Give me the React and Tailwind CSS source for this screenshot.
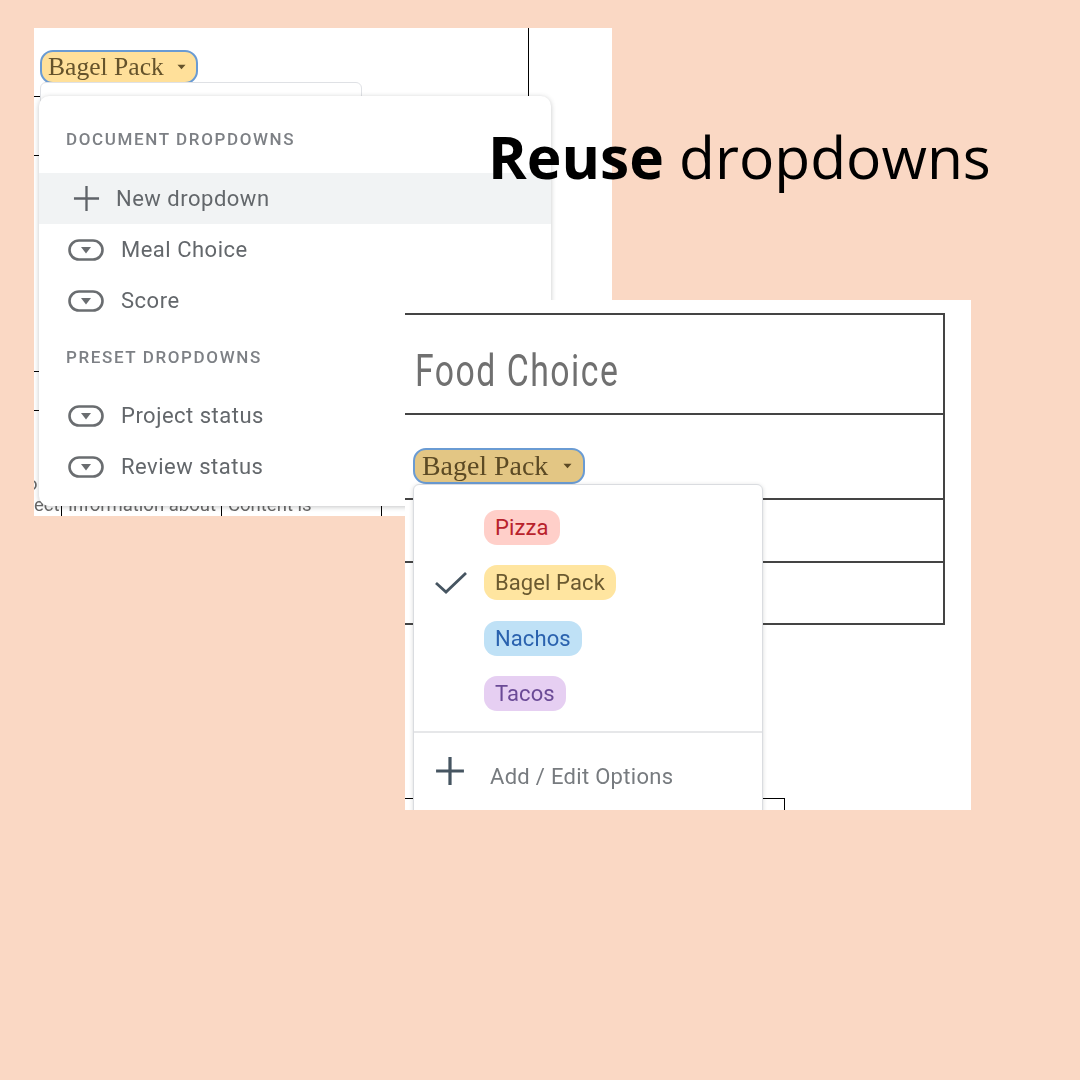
import React from "react";

const documentItems = ["Meal Choice", "Score"];
const presetItems = ["Project status", "Review status"];

const foodOptions = [
  { label: "Pizza", bg: "bg-[#ffcfc9]", text: "text-[#b8222c]" },
  { label: "Bagel Pack", bg: "bg-[#ffe5a0]", text: "text-[#6b5a30]", checked: true },
  { label: "Nachos", bg: "bg-[#bfe1f6]", text: "text-[#2a62ae]" },
  { label: "Tacos", bg: "bg-[#e6cff2]", text: "text-[#6a4a96]" },
];

function ChipIcon() {
  return (
    <svg width="36" height="22" viewBox="0 0 36 22" fill="none" className="shrink-0">
      <rect x="1.5" y="1.5" width="33" height="19" rx="9.5" stroke="#6a6d70" strokeWidth="2.6" />
      <path d="M13 8h10l-5 6.5z" fill="#6a6d70" />
    </svg>
  );
}

function PlusIcon({ size, color, weight }) {
  return (
    <svg width={size} height={size} viewBox="0 0 28 28" fill="none" className="shrink-0">
      <path d="M14 1v26M1 14h26" stroke={color} strokeWidth={weight} />
    </svg>
  );
}

function Stub({ className }) {
  return <div className={`absolute h-px bg-black ${className}`} />;
}

function SectionLabel({ children }) {
  return (
    <div className="font-['Roboto',sans-serif] text-[17px] leading-5 font-medium tracking-[1.62px] text-[#7d8085]">
      {children}
    </div>
  );
}

function DropdownRow({ label }) {
  return (
    <div className="flex h-[51px] items-center gap-[17px] pl-[29px]">
      <ChipIcon />
      <span className="text-[22px] tracking-[0.5px] text-[#63676b]">{label}</span>
    </div>
  );
}

function DocumentPanel() {
  return (
    <div className="absolute top-[28px] left-[34px] h-[488px] w-[578px] overflow-hidden bg-white">
      <div className="absolute inset-0 blur-[0.4px]">
        {/* table behind the menus */}
        <div className="absolute top-0 left-[494px] h-[70px] w-px bg-black" />
        <Stub className="top-[68px] left-0 w-[8px]" />
        <Stub className="top-[127px] left-0 w-[8px]" />
        <Stub className="top-[343px] left-0 w-[8px]" />
        <Stub className="top-[382px] left-0 w-[8px]" />
        <span className="absolute top-[444px] -left-[7px] font-['Roboto',sans-serif] text-[18.5px] leading-6 text-[#666]">o</span>
        <div className="absolute top-[470px] left-0 flex h-[18px] w-[350px] overflow-hidden font-['Roboto',sans-serif] text-[18.5px] leading-[14px] text-[#666]">
          <span className="w-[28px] shrink-0 border-r border-black pr-[6px] text-right">ect</span>
          <span className="w-[160px] shrink-0 border-r border-black pl-[6px] whitespace-nowrap">Information about</span>
          <span className="w-[160px] shrink-0 border-r border-black pl-[6px] whitespace-nowrap">Content is</span>
        </div>

        <div className="absolute top-[22px] left-[6px] flex h-[34px] items-center rounded-[13px] border-2 border-[#6a9bd3] bg-[#ffe09a] pr-[10px] pl-[6px] font-['Liberation_Serif',serif] text-[25.6px] text-[#65532b]">
          <span className="leading-none">Bagel Pack</span>
          <svg width="9" height="6" viewBox="0 0 10 6" className="ml-[13px]">
            <path d="M0.5 0.5h9L5 5.5z" fill="#65532b" />
          </svg>
        </div>
        <div className="absolute top-[54px] left-[6px] h-[60px] w-[322px] rounded-md border border-[#dfe1e5] bg-white" />

        <div className="absolute top-[68px] left-[5px] flex h-[410px] w-[512px] flex-col rounded-[10px] bg-white font-['Roboto',sans-serif] shadow-[0_1px_5px_rgba(60,64,67,0.3)]">
          <div className="px-[27px] pt-[33px] pb-[24px]">
            <SectionLabel>DOCUMENT DROPDOWNS</SectionLabel>
          </div>
          <div className="flex h-[51px] items-center gap-[16px] bg-[#f1f3f4] pl-[34px]">
            <PlusIcon size={27} color="#5f6368" weight={2.4} />
            <span className="text-[22px] tracking-[0.5px] text-[#63676b]">New dropdown</span>
          </div>
          {documentItems.map((item) => (
            <DropdownRow key={item} label={item} />
          ))}
          <div className="px-[27px] pt-[21px] pb-[23px]">
            <SectionLabel>PRESET DROPDOWNS</SectionLabel>
          </div>
          {presetItems.map((item) => (
            <DropdownRow key={item} label={item} />
          ))}
        </div>
      </div>
    </div>
  );
}

function FoodPanel() {
  return (
    <div className="absolute top-[300px] left-[405px] h-[510px] w-[566px] overflow-hidden bg-white">
      <div className="absolute inset-0 blur-[0.4px]">
        {/* table */}
        <div className="absolute top-[13px] left-0 flex h-[312px] w-[540px] flex-col border-t-2 border-r-2 border-b-2 border-[#444]">
          <div className="flex h-[100px] items-center border-b-2 border-[#444] pt-[12px] pl-[10px]">
            <span className="origin-left scale-x-[0.75] font-['Roboto',sans-serif] text-[45px] leading-none tracking-[2px] whitespace-nowrap text-[#707070]">
              Food Choice
            </span>
          </div>
          <div className="h-[85px] border-b-2 border-[#444]" />
          <div className="h-[63px] border-b-2 border-[#444]" />
        </div>
        <div className="absolute top-[498px] left-0 h-[12px] w-[380px] border-t border-r border-black" />

        <div className="absolute top-[148px] left-[8px] flex h-[36px] items-center rounded-[13px] border-2 border-[#6a9bd3] bg-[#e3c684] pr-[11px] pl-[7px] font-['Liberation_Serif',serif] text-[27.9px] text-[#5c4a24]">
          <span className="leading-none">Bagel Pack</span>
          <svg width="9" height="6" viewBox="0 0 10 6" className="ml-[15px]">
            <path d="M0.5 0.5h9L5 5.5z" fill="#5c4a24" />
          </svg>
        </div>

        <div className="absolute top-[184px] left-[8px] flex h-[340px] w-[350px] flex-col rounded-md border border-[#dadce0] bg-white font-['Roboto',sans-serif] shadow-[0_1px_4px_rgba(60,64,67,0.2)]">
          <div className="flex flex-col pt-[25px]">
            {foodOptions.map((option) => (
              <div key={option.label} className="flex h-[55.3px] items-start pl-[20px]">
                <div className="flex h-[35px] w-[50px] items-center">
                  {option.checked && (
                    <svg width="34" height="24" viewBox="0 0 34 24" fill="none" className="-mt-[2px]">
                      <path d="M2 13l10 9L32 3" stroke="#465561" strokeWidth="2.8" />
                    </svg>
                  )}
                </div>
                <span className={`flex h-[35px] items-center rounded-[13px] px-[11px] text-[22px] tracking-[0.1px] ${option.bg} ${option.text}`}>
                  {option.label}
                </span>
              </div>
            ))}
          </div>
          <div className="border-t-2 border-[#e6e7e9]" />
          <div className="flex h-[86px] items-start gap-[25px] pt-[23px] pl-[21px]">
            <PlusIcon size={30} color="#465561" weight={3} />
            <span className="pt-[4px] text-[22px] tracking-[0.3px] text-[#777b7f]">Add / Edit Options</span>
          </div>
        </div>
      </div>
    </div>
  );
}

export default function App() {
  return (
    <div className="relative h-[1080px] w-[1080px] overflow-hidden bg-[#fad8c4]">
      <DocumentPanel />
      <h1 className="absolute top-[118px] left-[488px] font-['Open_Sans',sans-serif] text-[58.7px] leading-[76px] font-normal whitespace-nowrap text-black">
        <span className="font-bold">Reuse</span> dropdowns
      </h1>
      <FoodPanel />
    </div>
  );
}
